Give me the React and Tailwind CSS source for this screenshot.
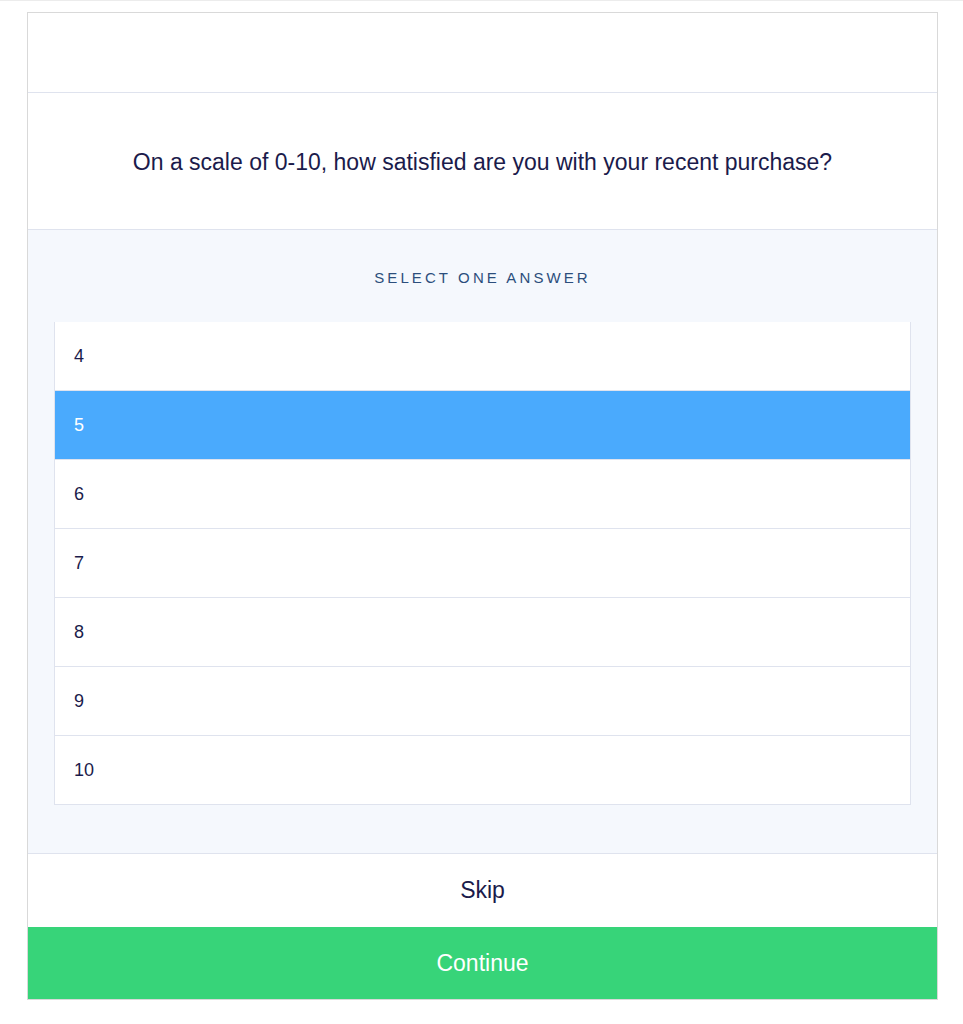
import React, { useState } from 'react';

const options = [4, 5, 6, 7, 8, 9, 10];

export default function App() {
  const [selected, setSelected] = useState(5);

  return (
    <div className="min-h-screen bg-white border-t border-[#ececec] font-['Liberation_Sans',Arial,sans-serif] text-[#1b1b4b]">
      <div className="pt-[11px] pl-[27px] pr-[25px] pb-[26px]">
        <div className="border border-[#d9d9d9] bg-white">
          {/* Header */}
          <div className="h-[80px] border-b border-[#dfe3ee]"></div>

          {/* Question */}
          <div className="h-[137px] flex items-center justify-center border-b border-[#dfe3ee]">
            <p className="text-[23px] leading-[28px] mt-[1px]">
              On a scale of 0-10, how satisfied are you with your recent purchase?
            </p>
          </div>

          {/* Answers */}
          <div className="bg-[#f5f8fd] border-b border-[#dfe3ee] px-[26px] pb-[48px]">
            <div className="h-[92px] flex items-center justify-center">
              <span className="text-[15px] tracking-[3.1px] text-[#2c4e7c] mt-[5px]">SELECT ONE ANSWER</span>
            </div>
            <div className="border-x border-b border-[#dfe3ee] bg-white">
              {options.map((n, i) => (
                <button
                  key={n}
                  onClick={() => setSelected(n)}
                  className={`w-full flex items-center pl-[19px] text-[18px] text-left ${
                    i > 0 ? 'h-[69px] border-t border-[#dfe3ee]' : 'h-[68px]'
                  } ${selected === n ? 'bg-[#4aaafd] text-white border-[#4aaafd]' : 'bg-white text-[#1b1b4b]'}`}
                >
                  {n}
                </button>
              ))}
            </div>
          </div>

          {/* Skip */}
          <button className="w-full h-[73px] flex items-center justify-center text-[23px] bg-white">
            Skip
          </button>

          {/* Continue */}
          <button className="w-full h-[72px] flex items-center justify-center text-[23px] text-white bg-[#37d479]">
            Continue
          </button>
        </div>
      </div>
    </div>
  );
}
